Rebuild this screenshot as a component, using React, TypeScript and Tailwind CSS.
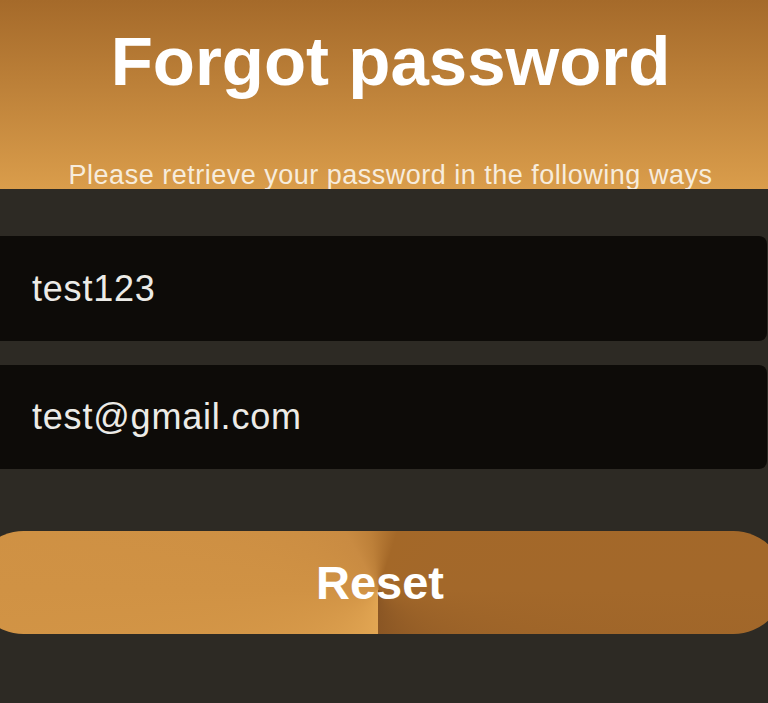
export default function App() {
  return (
    <div className="min-h-screen w-full overflow-hidden bg-[#2d2a24] font-['Liberation_Sans',Arial,sans-serif]">
      {/* Header */}
      <div className="flex h-[189px] flex-col items-center overflow-hidden bg-gradient-to-b from-[#a56a2a] to-[#da9d4b] pl-[13px] pt-[27px]">
        <h1 className="text-[69px] font-bold leading-none text-white">Forgot password</h1>
        <p className="mt-[66px] whitespace-nowrap text-[27px] leading-none tracking-[0.5px] text-[#f7ecdc]">
          Please retrieve your password in the following ways
        </p>
      </div>

      {/* Fields */}
      <div className="mt-[47px] flex flex-col gap-[24px]">
        <div className="ml-[-10px] mr-[1px] flex h-[105px] items-center rounded-[8px] bg-[#0d0b08] pl-[42px]">
          <span className="text-[36px] leading-none tracking-[0.8px] text-[#ecebe7]">test123</span>
        </div>
        <div className="ml-[-10px] mr-[1px] flex h-[104px] items-center rounded-[8px] bg-[#0d0b08] pl-[42px]">
          <span className="text-[36px] leading-none tracking-[0.8px] text-[#ecebe7]">test@gmail.com</span>
        </div>
      </div>

      {/* Reset button */}
      <button className="ml-[-28px] mt-[62px] flex h-[103px] w-[813px] items-center justify-center rounded-full bg-[conic-gradient(from_180deg_at_50%_57%,#e2a653_0deg,#d09244_90deg,#c98b42_150deg,#bd8039_172deg,#a46828_198deg,#a3682a_270deg,#8a5624_360deg)] pl-[3px]">
        <span className="text-[47px] font-bold leading-none text-white">Reset</span>
      </button>
    </div>
  )
}
